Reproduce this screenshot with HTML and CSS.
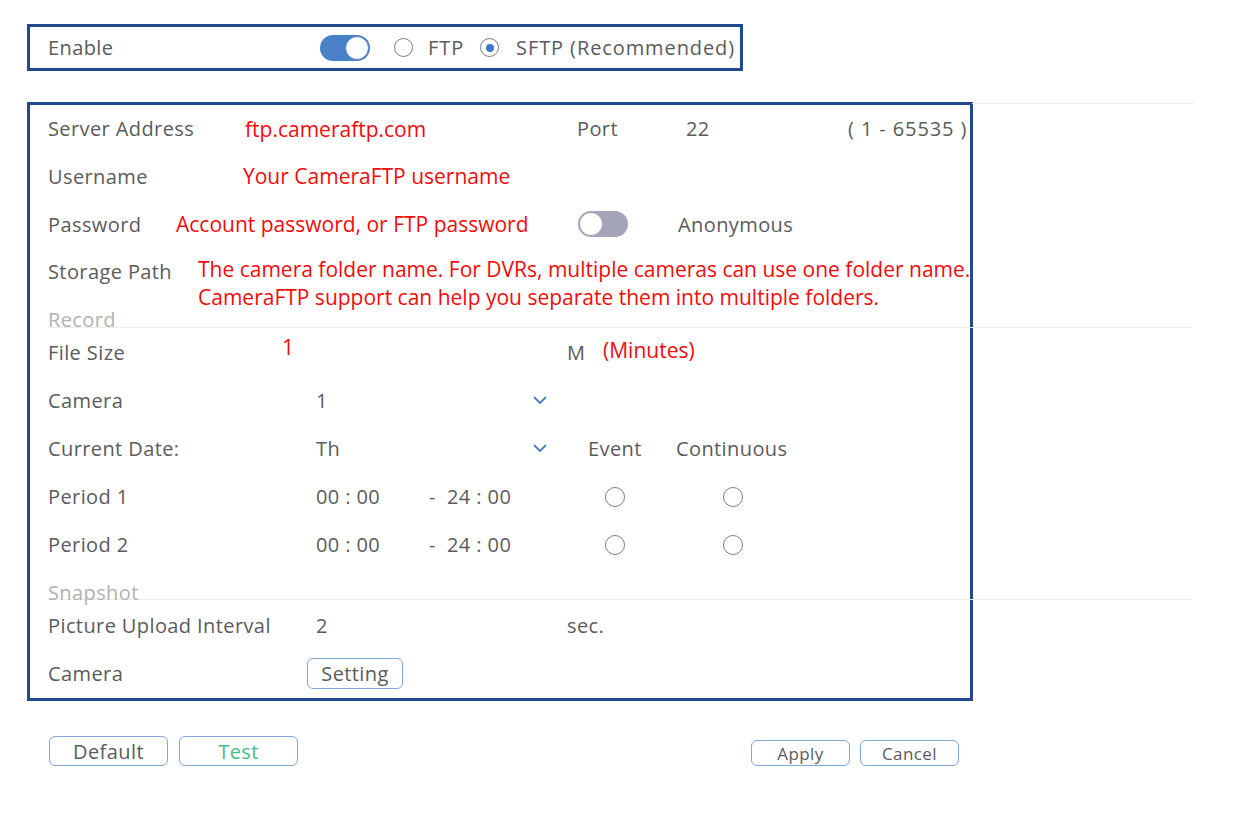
FILE: index.html
```html
<!DOCTYPE html>
<html>
<head>
<meta charset="utf-8">
<title>FTP Settings</title>
<link rel="stylesheet" href="styles.css">
</head>
<body>
<div class="page">
  <div class="enable-box">
    <span class="lbl w272">Enable</span>
    <span class="toggle on"><span class="knob"></span></span>
    <span class="radio r-ftp"></span><span class="opt">FTP</span>
    <span class="radio checked r-sftp"></span><span class="opt">SFTP (Recommended)</span>
  </div>

  <div class="main-box">
    <div class="row h47">
      <span class="lbl w197">Server Address</span>
      <span class="red w332">ftp.cameraftp.com</span>
      <span class="lbl w109">Port</span>
      <span class="lbl w162">22</span>
      <span class="lbl range">( 1 - 65535 )</span>
    </div>
    <div class="row">
      <span class="lbl w195">Username</span>
      <span class="red">Your CameraFTP username</span>
    </div>
    <div class="row">
      <span class="lbl w128">Password</span>
      <span class="red w402">Account password, or FTP password</span>
      <span class="w100"><span class="toggle off"><span class="knob"></span></span></span>
      <span class="lbl">Anonymous</span>
    </div>
    <div class="row storage">
      <span class="lbl w150 tall">Storage Path</span>
      <div class="red multi">
        <div>The camera folder name. For DVRs, multiple cameras can use one folder name.</div>
        <div>CameraFTP support can help you separate them into multiple folders.</div>
      </div>
    </div>
    <div class="section record"><span class="sec-title">Record</span></div>
    <div class="row">
      <span class="lbl w234">File Size</span>
      <span class="red w285 up">1</span>
      <span class="lbl w36">M</span>
      <span class="red up2">(Minutes)</span>
    </div>
    <div class="row">
      <span class="lbl w268">Camera</span>
      <span class="lbl w217">1</span>
      <span class="chev"><svg width="14" height="9" viewBox="0 0 14 9"><path d="M1.5 1.5 L7 7 L12.5 1.5" fill="none" stroke="#4a7fc4" stroke-width="1.8" stroke-linecap="round" stroke-linejoin="round"/></svg></span>
    </div>
    <div class="row">
      <span class="lbl w268">Current Date:</span>
      <span class="lbl w217">Th</span>
      <span class="chev w55"><svg width="14" height="9" viewBox="0 0 14 9"><path d="M1.5 1.5 L7 7 L12.5 1.5" fill="none" stroke="#4a7fc4" stroke-width="1.8" stroke-linecap="round" stroke-linejoin="round"/></svg></span>
      <span class="lbl w88">Event</span>
      <span class="lbl">Continuous</span>
    </div>
    <div class="row">
      <span class="lbl w268">Period 1</span>
      <span class="lbl w112">00 : 00</span>
      <span class="lbl w177">-&nbsp;&nbsp;24 : 00</span>
      <span class="w118"><span class="radio"></span></span>
      <span class="radio"></span>
    </div>
    <div class="row">
      <span class="lbl w268">Period 2</span>
      <span class="lbl w112">00 : 00</span>
      <span class="lbl w177">-&nbsp;&nbsp;24 : 00</span>
      <span class="w118"><span class="radio"></span></span>
      <span class="radio"></span>
    </div>
    <div class="section snapshot"><span class="sec-title">Snapshot</span></div>
    <div class="row">
      <span class="lbl w268">Picture Upload Interval</span>
      <span class="lbl w251">2</span>
      <span class="lbl">sec.</span>
    </div>
    <div class="row last">
      <span class="lbl w259">Camera</span>
      <span class="btn setting">Setting</span>
    </div>
  </div>

  <div class="actions">
    <div class="left-actions">
      <span class="btn big">Default</span>
      <span class="btn big test">Test</span>
    </div>
    <div class="right-actions">
      <span class="btn small">Apply</span>
      <span class="btn small">Cancel</span>
    </div>
  </div>
</div>
</body>
</html>
```

FILE: styles.css
```css
* { box-sizing: border-box; }
html, body { margin: 0; padding: 0; background: #ffffff; }
body {
  font-family: "Open Sans", "Noto Sans", sans-serif;
  color: #5b5b5b;
  font-size: 20px;
  letter-spacing: 0.4px;
  overflow: hidden;
}
.page {
  padding: 24px 0 0 27px;
  width: 1260px;
  height: 835px;
  position: relative;
}

/* Enable box */
.enable-box {
  width: 716px;
  height: 47px;
  border: 3px solid #22488f;
  display: flex;
  align-items: center;
  padding-left: 18px;
}
.opt { color: #5b5b5b; letter-spacing: 0.9px; }
.r-ftp { margin-left: 24px; margin-right: 15px; }
.r-sftp { margin-left: 16px; margin-right: 17px; }
.range { letter-spacing: 0.9px; }

.toggle {
  display: inline-block;
  width: 50px;
  height: 26px;
  border-radius: 13px;
  position: relative;
  flex: none;
}
.toggle .knob {
  position: absolute;
  top: 1px;
  width: 24px;
  height: 24px;
  border-radius: 50%;
  background: #fff;
}
.toggle.on { background: #4a80c7; }
.toggle.on .knob { right: 1px; border: 1.5px solid #4a80c7; }
.toggle.off { background: #a5a5b9; }
.toggle.off .knob { left: 1px; border: 1.5px solid #a5a5b9; }

.radio {
  display: inline-block;
  width: 19px;
  height: 19px;
  border-radius: 50%;
  border: 1.3px solid #7d7d7d;
  background: #fff;
  flex: none;
  position: relative;
  vertical-align: middle;
}
.radio.checked::after {
  content: "";
  position: absolute;
  left: 50%;
  top: 50%;
  width: 8px;
  height: 8px;
  margin: -4px 0 0 -4px;
  border-radius: 50%;
  background: #3f78c6;
}

/* Main box */
.main-box {
  margin-top: 31px;
  width: 946px;
  border: 3px solid #22488f;
  padding-left: 18px;
  position: relative;
}
.main-box::before {
  content: "";
  position: absolute;
  left: 942px;
  top: -2px;
  width: 222px;
  height: 1px;
  background: #ececec;
}
.row {
  display: flex;
  align-items: center;
  height: 48px;
  white-space: nowrap;
}
.row.h47 { height: 47px; }
.row.last { height: 49px; padding-bottom: 1px; }
.row.storage {
  align-items: flex-start;
  height: 63px;
}
.tall { line-height: 48px; }
.multi {
  margin-top: 7px;
  line-height: 28px;
}
.red {
  color: #f40b0b;
  font-family: "Open Sans", "Noto Sans", sans-serif;
  font-size: 21px;
  letter-spacing: 0;
}
.up { margin-bottom: 10px; }
.up2 { margin-bottom: 4px; }

.section {
  position: relative;
  display: flex;
  color: #b1b1b1;
}
.section.record { height: 17px; align-items: center; }
.section.snapshot { height: 33px; align-items: flex-end; }
.sec-title { line-height: 18px; position: relative; z-index: 1; }
.section.snapshot .sec-title { margin-bottom: -1px; }
.section::after {
  content: "";
  position: absolute;
  left: 0;
  width: 1144px;
  height: 1px;
  background: #ececec;
}
.section.record::after { top: 16px; }
.section.snapshot::after { bottom: 1px; }

.chev { display: flex; align-items: center; height: 20px; }

/* column widths */
.w272 { width: 272px; flex: none; }
.w197 { width: 197px; flex: none; }
.w332 { width: 332px; flex: none; }
.w109 { width: 109px; flex: none; }
.w162 { width: 162px; flex: none; }
.w195 { width: 195px; flex: none; }
.w128 { width: 128px; flex: none; }
.w402 { width: 402px; flex: none; }
.w100 { width: 100px; flex: none; display: flex; align-items: center; }
.w150 { width: 150px; flex: none; }
.w234 { width: 234px; flex: none; }
.w285 { width: 285px; flex: none; }
.w36 { width: 36px; flex: none; }
.w268 { width: 268px; flex: none; }
.w217 { width: 217px; flex: none; }
.w55 { width: 55px; flex: none; }
.w88 { width: 88px; flex: none; }
.w112 { width: 112px; flex: none; }
.w177 { width: 177px; flex: none; padding-left: 1px; }
.w118 { width: 118px; flex: none; display: flex; align-items: center; }
.w251 { width: 251px; flex: none; }
.w259 { width: 259px; flex: none; }

.row .radio { width: 20px; height: 20px; margin-top: 2px; }

/* Buttons */
.btn {
  display: inline-flex;
  align-items: center;
  justify-content: center;
  border: 1.5px solid #82a5d6;
  border-radius: 6px;
  background: #fff;
  color: #5b5b5b;
}
.btn.setting { width: 96px; height: 31px; }
.actions {
  display: flex;
  width: 932px;
  margin-top: 35px;
  padding-left: 22px;
  justify-content: space-between;
  align-items: flex-start;
}
.left-actions, .right-actions { display: flex; gap: 11px; }
.btn.big { width: 119px; height: 30px; font-size: 20px; }
.btn.test { color: #46bd82; }
.right-actions { margin-top: 4px; gap: 10px; }
.btn.small { width: 99px; height: 26px; font-size: 17px; }
```
